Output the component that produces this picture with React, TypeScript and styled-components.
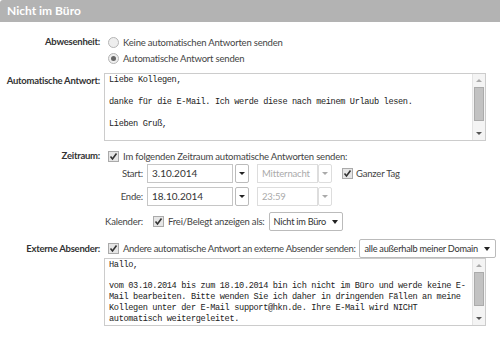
import React from 'react';
import styled, { createGlobalStyle } from 'styled-components';

const GlobalStyle = createGlobalStyle`
  body {
    margin: 0;
    background: #fff;
    font-family: Lato, "Open Sans", sans-serif;
    font-size: 9.5px;
    letter-spacing: -0.2px;
    color: #444;
  }
`;

const Panel = styled.div`
  width: 500px;
  height: 338px;
  overflow: hidden;
`;

const Header = styled.div`
  height: 22px;
  line-height: 22px;
  padding-left: 7px;
  background: #b3b3b3;
  color: #fff;
  font-weight: 700;
  font-size: 12px;
  letter-spacing: 0;
  border-top-left-radius: 3px;
`;

const Form = styled.div`
  padding-top: 12px;
`;

const Row = styled.div<{ $mt?: number }>`
  display: grid;
  grid-template-columns: 100px 392px;
  column-gap: 4px;
  margin-top: ${(p) => p.$mt ?? 0}px;
`;

const Label = styled.div<{ $pt?: number }>`
  text-align: right;
  font-weight: 700;
  letter-spacing: -0.25px;
  color: #333;
  line-height: 16px;
  padding-top: ${(p) => p.$pt ?? 0}px;
  white-space: nowrap;
`;

const Field = styled.div`
  display: flex;
  flex-direction: column;
`;

const Line = styled.div`
  display: flex;
  align-items: center;
  gap: 4px;
  height: 16px;
  padding-left: 4px;
  white-space: nowrap;
`;

const RadioDot = styled.span<{ $on?: boolean }>`
  width: 9px;
  height: 9px;
  border-radius: 50%;
  border: 1px solid #b5b5b5;
  background: #eee;
  display: inline-flex;
  align-items: center;
  justify-content: center;
  &::after {
    content: '';
    width: 5px;
    height: 5px;
    border-radius: 50%;
    background: ${(p) => (p.$on ? '#666' : 'transparent')};
  }
`;

const Check = () => (
  <svg width="11" height="11" viewBox="0 0 11 11" style={{ flex: 'none' }}>
    <rect x="0.5" y="0.5" width="10" height="10" fill="#e6e6e6" stroke="#aaa" />
    <path d="M2.5 5.5 L4.5 8 L8.5 2.5" fill="none" stroke="#333" strokeWidth="1.6" />
  </svg>
);

const TextBox = styled.div<{ $h: number }>`
  width: 380px;
  height: ${(p) => p.$h}px;
  border: 1px solid #ccc;
  display: flex;
  background: #fff;
`;

const TextBody = styled.div<{ $lh: number }>`
  flex: 1;
  padding: 1px 4px;
  font-family: "Liberation Mono", "DejaVu Sans Mono", monospace;
  font-size: 8.6px;
  letter-spacing: -0.34px;
  line-height: ${(p) => p.$lh}px;
  color: #222;
  white-space: pre;
  overflow: hidden;
`;

const ScrollBar = styled.div`
  width: 12px;
  background: #f4f4f4;
  border-left: 1px solid #e4e4e4;
  display: flex;
  flex-direction: column;
  align-items: center;
`;

const ScrollArrow = styled.div<{ $up?: boolean }>`
  height: 13px;
  display: flex;
  align-items: center;
  justify-content: center;
  &::after {
    content: '';
    border-left: 3px solid transparent;
    border-right: 3px solid transparent;
    ${(p) => (p.$up ? 'border-bottom: 3px solid #aaa;' : 'border-top: 3px solid #555;')}
  }
`;

const Thumb = styled.div<{ $h: number }>`
  width: 10px;
  height: ${(p) => p.$h}px;
  background: #c2c2c2;
  border: 1px solid #ababab;
  box-sizing: border-box;
`;

const SubGrid = styled.div`
  display: grid;
  grid-template-columns: 39px auto;
  column-gap: 4px;
  align-items: center;
`;

const SubLabel = styled.div<{ $mt?: number }>`
  text-align: right;
  color: #444;
  white-space: nowrap;
  margin-top: ${(p) => p.$mt ?? 0}px;
`;

const DateLine = styled.div<{ $mt?: number }>`
  display: flex;
  align-items: center;
  margin-top: ${(p) => p.$mt ?? 0}px;
`;

const Input = styled.div<{ $w: number; $disabled?: boolean; $ml?: number }>`
  width: ${(p) => p.$w}px;
  height: 19px;
  box-sizing: border-box;
  margin-left: ${(p) => p.$ml ?? 0}px;
  border: 1px solid ${(p) => (p.$disabled ? '#ddd' : '#c6c6c6')};
  padding-left: 4px;
  line-height: 17px;
  font-size: ${(p) => (p.$disabled ? 9.5 : 10)}px;
  letter-spacing: ${(p) => (p.$disabled ? -0.15 : 0)}px;
  color: ${(p) => (p.$disabled ? '#aaa' : '#333')};
  overflow: hidden;
  white-space: nowrap;
`;

const DropBtn = styled.div<{ $disabled?: boolean }>`
  width: 14px;
  height: 19px;
  box-sizing: border-box;
  margin-left: ${(p) => (p.$disabled ? 0 : 2)}px;
  border: 1px solid ${(p) => (p.$disabled ? '#ddd' : '#bbb')};
  border-radius: 2px;
  display: flex;
  align-items: center;
  justify-content: center;
  &::after {
    content: '';
    border-left: 3px solid transparent;
    border-right: 3px solid transparent;
    border-top: 3px solid ${(p) => (p.$disabled ? '#aaa' : '#222')};
  }
`;

const Select = styled.div<{ $w: number }>`
  width: ${(p) => p.$w}px;
  height: 19px;
  box-sizing: border-box;
  border: 1px solid #bbb;
  border-radius: 2px;
  padding: 0 5px 0 4px;
  display: flex;
  align-items: center;
  justify-content: space-between;
  color: #333;
  white-space: nowrap;
  font-size: 9.2px;
  letter-spacing: -0.25px;
  &::after {
    content: '';
    flex: none;
    margin-left: 6px;
    border-left: 3.5px solid transparent;
    border-right: 3.5px solid transparent;
    border-top: 4px solid #222;
  }
`;

const Inline = styled.div<{ $ml?: number; $gap?: number; $tight?: boolean }>`
  display: flex;
  align-items: center;
  gap: ${(p) => p.$gap ?? 4}px;
  margin-left: ${(p) => p.$ml ?? 0}px;
  white-space: nowrap;
  letter-spacing: ${(p) => (p.$tight ? -0.3 : -0.2)}px;
`;

const replyText = `Liebe Kollegen,

danke für die E-Mail. Ich werde diese nach meinem Urlaub lesen.

Lieben Gruß,`;

const externalText = `Hallo,

vom 03.10.2014 bis zum 18.10.2014 bin ich nicht im Büro und werde keine E-
Mail bearbeiten. Bitte wenden Sie ich daher in dringenden Fällen an meine
Kollegen unter der E-Mail support@hkn.de. Ihre E-Mail wird NICHT
automatisch weitergeleitet.`;

const FakeTextArea: React.FC<{ text: string; height: number; lh: number }> = ({
  text,
  height,
  lh,
}) => (
  <TextBox $h={height}>
    <TextBody $lh={lh}>{text}</TextBody>
    <ScrollBar>
      <ScrollArrow $up />
      <Thumb $h={34} />
      <div style={{ flex: 1 }} />
      <ScrollArrow />
    </ScrollBar>
  </TextBox>
);

const App: React.FC = () => {
  return (
    <Panel>
      <GlobalStyle />
      <Header>Nicht im Büro</Header>
      <Form>
        <Row>
          <Label>Abwesenheit:</Label>
          <Field>
            <Line>
              <RadioDot />
              Keine automatischen Antworten senden
            </Line>
            <Line>
              <RadioDot $on />
              Automatische Antwort senden
            </Line>
          </Field>
        </Row>

        <Row $mt={7}>
          <Label>Automatische Antwort:</Label>
          <FakeTextArea text={replyText} height={66} lh={11} />
        </Row>

        <Row $mt={7}>
          <Label>Zeitraum:</Label>
          <Field>
            <Line>
              <Check />
              Im folgenden Zeitraum automatische Antworten senden:
            </Line>
            <SubGrid>
              <SubLabel>Start:</SubLabel>
              <DateLine>
                <Input $w={86}>3.10.2014</Input>
                <DropBtn />
                <Input $w={61} $disabled $ml={8}>
                  Mitternacht
                </Input>
                <DropBtn $disabled />
                <Inline $ml={10} $gap={3}>
                  <Check />
                  Ganzer Tag
                </Inline>
              </DateLine>
              <SubLabel $mt={4}>Ende:</SubLabel>
              <DateLine $mt={4}>
                <Input $w={86}>18.10.2014</Input>
                <DropBtn />
                <Input $w={61} $disabled $ml={8}>
                  23:59
                </Input>
                <DropBtn $disabled />
              </DateLine>
              <SubLabel $mt={6}>Kalender:</SubLabel>
              <DateLine $mt={6}>
                <Inline $ml={6} $gap={4}>
                  <Check />
                  Frei/Belegt anzeigen als:
                  <Select $w={74}>Nicht im Büro</Select>
                </Inline>
              </DateLine>
            </SubGrid>
          </Field>
        </Row>

        <Row $mt={8}>
          <Label $pt={2}>Externe Absender:</Label>
          <Field>
            <Inline $ml={4} $gap={4} $tight>
              <Check />
              Andere automatische Antwort an externe Absender senden:
              <Select $w={138}>alle außerhalb meiner Domain</Select>
            </Inline>
            <FakeTextArea text={externalText} height={66} lh={10.7} />
          </Field>
        </Row>
      </Form>
    </Panel>
  );
};

export default App;
